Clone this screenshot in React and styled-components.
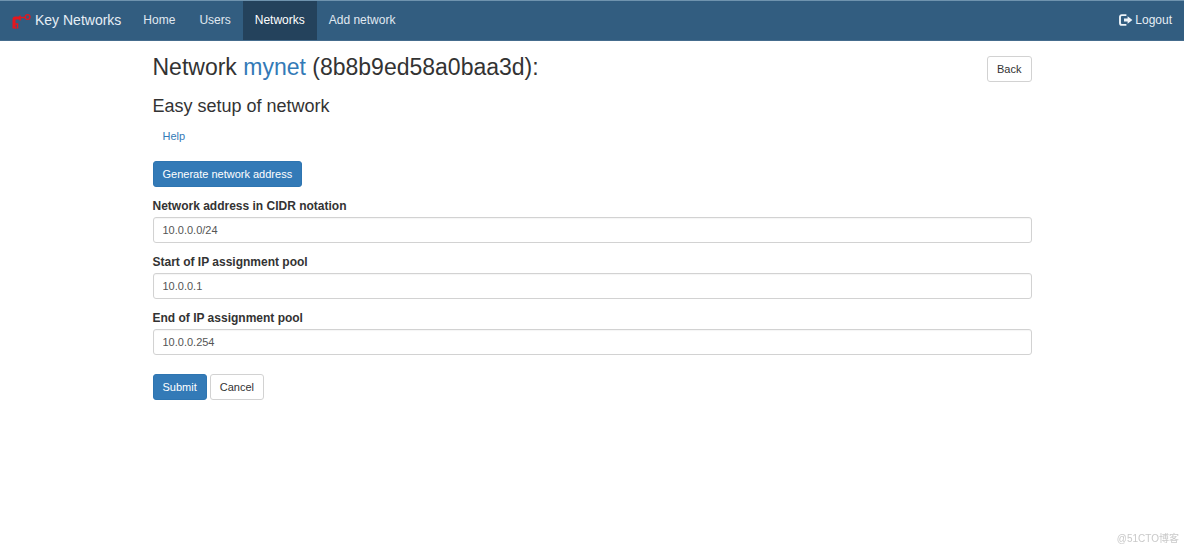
import React from 'react';
import styled, { createGlobalStyle, css } from 'styled-components';

const GlobalStyle = createGlobalStyle`
  *, *::before, *::after { box-sizing: border-box; }
  body {
    margin: 0;
    background: #fff;
    color: #333;
    font-family: "Liberation Sans", Arial, "Noto Sans CJK SC", sans-serif;
    font-size: 12px;
    line-height: 18px;
  }
`;

const Navbar = styled.nav`
  display: flex;
  align-items: stretch;
  justify-content: space-between;
  height: 41px;
  padding: 0 12px;
  background: #325d80;
  border-top: 1px solid #6f93ae;
  border-bottom: 1px solid #456c8d;
`;

const NavGroup = styled.div`
  display: flex;
`;

const Brand = styled.a`
  display: flex;
  align-items: center;
  gap: 3px;
  padding: 0 10px 2px 0;
  color: #e6eef5;
  font-size: 14px;
  text-decoration: none;
`;

const NavList = styled.ul`
  display: flex;
  margin: 0;
  padding: 0;
  list-style: none;
`;

const NavLink = styled.a`
  display: flex;
  align-items: center;
  height: 100%;
  padding: 0 12px 2px;
  color: ${({ $active }) => ($active ? '#fff' : '#e0e9f1')};
  background: ${({ $active }) => ($active ? '#24425c' : 'transparent')};
  font-size: 12px;
  text-decoration: none;
`;

const LogoutLink = styled.a`
  display: flex;
  align-items: center;
  gap: 2px;
  padding-bottom: 2px;
  color: #e6eef5;
  font-size: 12px;
  text-decoration: none;
`;

const Container = styled.main`
  width: calc(100% - 305px);
  max-width: 1140px;
  margin: 0 auto;
  padding-top: 13px;
`;

const TitleRow = styled.header`
  display: flex;
  align-items: flex-start;
  justify-content: space-between;
`;

const Title = styled.h1`
  margin: 0;
  font-size: 23px;
  line-height: 27px;
  font-weight: 400;
`;

const Subtitle = styled.h2`
  margin: 14px 0 7px;
  font-size: 18px;
  line-height: 20px;
  font-weight: 400;
`;

const TextLink = styled.a`
  color: #337ab7;
  text-decoration: none;
`;

const variants = {
  primary: css`
    color: #fff;
    background: #337ab7;
    border-color: #2e75b1;
  `,
  plain: css`
    color: #333;
    background: #fff;
    border-color: #d2d2d2;
  `,
  link: css`
    color: #337ab7;
    background: transparent;
    border-color: transparent;
  `,
};

const Button = styled.button`
  height: 26px;
  padding: 0 9px;
  border: 1px solid;
  border-radius: 3px;
  font-family: inherit;
  font-size: 11px;
  line-height: 22px;
  cursor: pointer;
  ${({ $variant = 'plain' }) => variants[$variant]}
`;

const BackButton = styled(Button)`
  margin-top: 2px;
`;

const Form = styled.form`
  display: flex;
  flex-direction: column;
  align-items: flex-start;
`;

const GenerateButton = styled(Button)`
  margin: 12px 0 10px;
`;

const Field = styled.div`
  display: flex;
  flex-direction: column;
  width: 100%;
  margin-bottom: 10px;
`;

const Label = styled.label`
  margin-bottom: 2px;
  font-size: 12px;
  line-height: 18px;
  font-weight: 700;
`;

const Input = styled.input`
  width: 100%;
  height: 26px;
  padding: 0 9px;
  color: #555;
  background: #fff;
  border: 1px solid #d2d2d2;
  border-radius: 3px;
  box-shadow: inset 0 1px 1px rgba(0, 0, 0, 0.04);
  font-family: inherit;
  font-size: 11px;
`;

const Actions = styled.div`
  display: flex;
  gap: 3px;
  margin-top: 9px;
`;

const Watermark = styled.small`
  position: fixed;
  right: 5px;
  bottom: 2px;
  color: #c9c9c9;
  font-size: 10px;
  line-height: 18px;
`;

function KeyLogo() {
  return (
    <svg width="20" height="18" viewBox="0 0 20 18" aria-hidden="true">
      <g fill="none" stroke="#e5161d">
        <circle cx="15.6" cy="6" r="2.4" strokeWidth="1.3" />
        <path d="M13.2 6.5H9" strokeWidth="1.3" />
        <path d="M8 4.4V9.4" strokeWidth="1.5" />
        <path d="M8.4 7.1H3.2Q2 7.1 2 8.4V17.6" strokeWidth="3" />
        <path d="M3 13H5.6V17.4M3 17H4.4" strokeWidth="1.4" />
      </g>
    </svg>
  );
}

function LogoutIcon() {
  return (
    <svg width="14" height="12" viewBox="0 0 14 12" aria-hidden="true">
      <path
        d="M7.4 1.1H2.9Q1 1.1 1 3V9Q1 10.9 2.9 10.9H7.4"
        fill="none"
        stroke="#edf3f8"
        strokeWidth="1.9"
      />
      <path d="M5 4.5H8.6V2.2L13.4 6L8.6 9.8V7.5H5Z" fill="#edf3f8" />
    </svg>
  );
}

const links = [
  { label: 'Home' },
  { label: 'Users' },
  { label: 'Networks', active: true },
  { label: 'Add network' },
];

const fields = [
  { id: 'networkCIDR', label: 'Network address in CIDR notation', value: '10.0.0.0/24' },
  { id: 'poolStart', label: 'Start of IP assignment pool', value: '10.0.0.1' },
  { id: 'poolEnd', label: 'End of IP assignment pool', value: '10.0.0.254' },
];

export default function App() {
  return (
    <>
      <GlobalStyle />
      <Navbar>
        <NavGroup>
          <Brand href="#">
            <KeyLogo />
            Key Networks
          </Brand>
          <NavList>
            {links.map(({ label, active }) => (
              <li key={label}>
                <NavLink href="#" $active={active} aria-current={active ? 'page' : undefined}>
                  {label}
                </NavLink>
              </li>
            ))}
          </NavList>
        </NavGroup>
        <LogoutLink href="#">
          <LogoutIcon />
          Logout
        </LogoutLink>
      </Navbar>
      <Container>
        <TitleRow>
          <Title>
            Network <TextLink href="#">mynet</TextLink> (8b8b9ed58a0baa3d):
          </Title>
          <BackButton type="button">Back</BackButton>
        </TitleRow>
        <Subtitle>Easy setup of network</Subtitle>
        <Button type="button" $variant="link">Help</Button>
        <Form onSubmit={(event) => event.preventDefault()}>
          <GenerateButton type="button" $variant="primary">
            Generate network address
          </GenerateButton>
          {fields.map(({ id, label, value }) => (
            <Field key={id}>
              <Label htmlFor={id}>{label}</Label>
              <Input id={id} type="text" defaultValue={value} />
            </Field>
          ))}
          <Actions>
            <Button type="submit" $variant="primary">Submit</Button>
            <Button type="button">Cancel</Button>
          </Actions>
        </Form>
      </Container>
      <Watermark>@51CTO博客</Watermark>
    </>
  );
}
